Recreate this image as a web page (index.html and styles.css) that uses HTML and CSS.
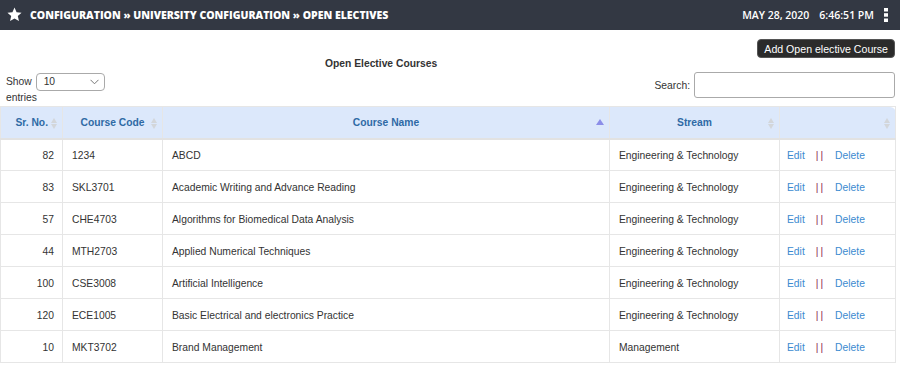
FILE: index.html
```html
<!DOCTYPE html>
<html>
<head>
    <meta charset="utf-8">
    <link rel="stylesheet" href="styles.css">
</head>
<body>
    <div class="topbar">
        <div class="crumbs">
            <svg class="star" width="15" height="15" viewBox="0 0 24 24"><path fill="#fff" d="M12 0.8l3.3 7.4 8 .8-6 5.4 1.8 7.9L12 18.2l-7.1 4.1 1.8-7.9-6-5.4 8-.8z"/></svg>
            <span>CONFIGURATION &raquo; UNIVERSITY CONFIGURATION &raquo; OPEN ELECTIVES</span>
        </div>
        <div class="clock">
            <span>MAY 28, 2020</span>
            <span>6:46:51 PM</span>
            <svg class="kebab" width="4" height="14" viewBox="0 0 4 14"><rect x="0" y="0" width="4" height="3.5" fill="#fff"/><rect x="0" y="5.2" width="4" height="3.5" fill="#fff"/><rect x="0" y="10.5" width="4" height="3.5" fill="#fff"/></svg>
        </div>
    </div>

    <div class="content">
        <div class="actions">
            <button class="btn-add">Add Open elective Course</button>
        </div>
        <div class="tools">
            <div class="length">
                <label>Show <span class="select">10<svg width="9" height="6" viewBox="0 0 9 6"><path d="M0.5 0.8L4.5 4.8 8.5 0.8" fill="none" stroke="#777" stroke-width="1"/></svg></span></label>
                <div>entries</div>
            </div>
            <div class="caption">Open Elective Courses</div>
            <div class="search">
                <label>Search:</label>
                <span class="search-box"></span>
            </div>
        </div>

        <table class="grid">
            <thead>
                <tr>
                    <th class="c-sr sort">Sr. No.</th>
                    <th class="c-code sort">Course Code</th>
                    <th class="c-name sort-asc">Course Name</th>
                    <th class="c-stream sort">Stream</th>
                    <th class="c-act sort"></th>
                </tr>
            </thead>
            <tbody>
                <tr><td class="num">82</td><td>1234</td><td>ABCD</td><td>Engineering &amp; Technology</td><td class="links"><a>Edit</a><span class="sep">||</span><a>Delete</a></td></tr>
                <tr><td class="num">83</td><td>SKL3701</td><td>Academic Writing and Advance Reading</td><td>Engineering &amp; Technology</td><td class="links"><a>Edit</a><span class="sep">||</span><a>Delete</a></td></tr>
                <tr><td class="num">57</td><td>CHE4703</td><td>Algorithms for Biomedical Data Analysis</td><td>Engineering &amp; Technology</td><td class="links"><a>Edit</a><span class="sep">||</span><a>Delete</a></td></tr>
                <tr><td class="num">44</td><td>MTH2703</td><td>Applied Numerical Techniques</td><td>Engineering &amp; Technology</td><td class="links"><a>Edit</a><span class="sep">||</span><a>Delete</a></td></tr>
                <tr><td class="num">100</td><td>CSE3008</td><td>Artificial Intelligence</td><td>Engineering &amp; Technology</td><td class="links"><a>Edit</a><span class="sep">||</span><a>Delete</a></td></tr>
                <tr><td class="num">120</td><td>ECE1005</td><td>Basic Electrical and electronics Practice</td><td>Engineering &amp; Technology</td><td class="links"><a>Edit</a><span class="sep">||</span><a>Delete</a></td></tr>
                <tr><td class="num">10</td><td>MKT3702</td><td>Brand Management</td><td>Management</td><td class="links"><a>Edit</a><span class="sep">||</span><a>Delete</a></td></tr>
            </tbody>
        </table>
    </div>
</body>
</html>
```

FILE: styles.css
```css
html,
body {
    margin: 0;
    padding: 0;
    background: #fff;
    font-family: "Liberation Sans", Arial, sans-serif;
    font-size: 10.3px;
    color: #333;
    overflow: hidden;
}

.topbar {
    height: 30px;
    background: #333843;
    color: #fff;
    display: flex;
    align-items: center;
    justify-content: space-between;
    padding: 0 12px 0 7px;
}

.crumbs {
    display: flex;
    align-items: center;
    gap: 8px;
    font-family: "Open Sans", sans-serif;
    font-weight: 800;
    font-size: 10.5px;
}

.star {
    margin-top: -2px;
}

.clock {
    display: flex;
    align-items: center;
    gap: 10px;
    font-family: "Open Sans", sans-serif;
    font-weight: 600;
    font-size: 10.5px;
}

.content {
    padding: 0 5px 0 0;
}

.actions {
    display: flex;
    justify-content: flex-end;
    padding-top: 9px;
}

.btn-add {
    background: #2b2b2b;
    color: #fff;
    border: 1px solid #555;
    border-radius: 4px;
    font-family: "Liberation Sans", Arial, sans-serif;
    font-size: 10.6px;
    height: 19px;
    padding: 0 6px;
}

.tools {
    display: flex;
    align-items: flex-start;
    height: 48px;
    padding-left: 6px;
}

.length {
    margin-top: 15px;
    width: 150px;
    line-height: 14px;
}

.select {
    display: inline-flex;
    align-items: center;
    justify-content: space-between;
    width: 55px;
    height: 16px;
    margin-left: 1px;
    padding: 0 5px 0 7px;
    border: 1px solid #aaa;
    border-radius: 4px;
    vertical-align: middle;
}

.caption {
    font-weight: bold;
    margin-top: 0;
    margin-left: 169px;
}

.search {
    display: flex;
    align-items: center;
    gap: 4px;
    margin-top: 14px;
    margin-left: auto;
}

.search-box {
    display: block;
    width: 199px;
    height: 24px;
    border: 1px solid #aaa;
    border-radius: 3px;
}

.grid {
    width: 895px;
    border-collapse: collapse;
    table-layout: fixed;
}

.grid th,
.grid td {
    box-sizing: border-box;
}

.grid th {
    background: #dce8fb;
    color: #2f6aa5;
    font-weight: bold;
    height: 32px;
    border: 1px solid #e6e6e6;
    border-bottom: 2px solid #e2e2e2;
    padding: 1px 10px 0;
    position: relative;
}

.grid thead tr th:last-child {
    border-top-right-radius: 6px;
}

.grid .c-sr { width: 62px; text-align: right; padding-right: 14px; }
.grid .c-code { width: 100px; text-align: center; }
.grid .c-name { width: 447px; }
.grid .c-stream { width: 170px; }
.grid .c-act { width: 116px; }

.grid th.sort::before {
    content: "";
    position: absolute;
    right: 5px;
    top: 17px;
    border-left: 3.5px solid transparent;
    border-right: 3.5px solid transparent;
    border-top: 5px solid #d3d6da;
}

.grid th.sort::after {
    content: "";
    position: absolute;
    right: 5px;
    top: 11px;
    border-left: 3.5px solid transparent;
    border-right: 3.5px solid transparent;
    border-bottom: 5px solid #d3d6da;
}

.grid th.sort-asc::after {
    content: "";
    position: absolute;
    right: 5px;
    top: 12px;
    border-left: 4px solid transparent;
    border-right: 4px solid transparent;
    border-bottom: 6px solid #8c8ee8;
}

.grid td {
    height: 32px;
    border: 1px solid #e6e6e6;
    border-top: 0;
    padding: 1px 8px 0 9px;
    white-space: nowrap;
}

.grid td.num {
    text-align: right;
    padding-right: 8px;
}

.grid td.links {
    padding-left: 7px;
}

.links a {
    color: #3b8ad0;
}

.links .sep {
    color: #8a1f50;
    letter-spacing: 2px;
    margin: 0 10px 0 11px;
}
```
